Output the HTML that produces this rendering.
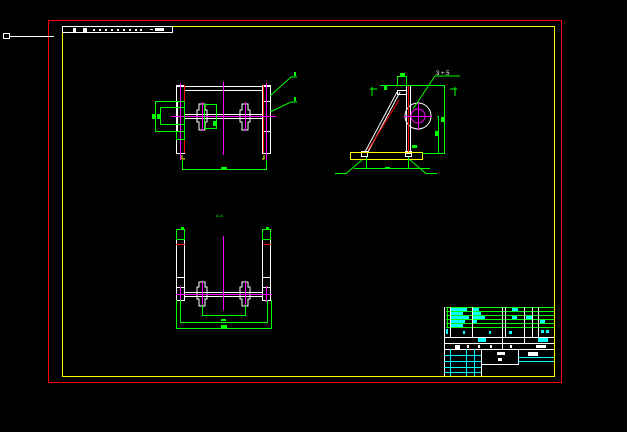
<!DOCTYPE html>
<html><head><style>html,body{margin:0;padding:0;background:#000;}svg{display:block}</style></head>
<body>
<svg width="627" height="432" viewBox="0 0 627 432" xmlns="http://www.w3.org/2000/svg" font-family="Liberation Sans, sans-serif">
<rect width="627" height="432" fill="#000"/>
<!-- borders -->
<rect x="48.5" y="20.5" width="513" height="362" fill="none" stroke="#f00" stroke-width="1"/>
<rect x="62.5" y="26.5" width="492" height="350" fill="none" stroke="#ff0" stroke-width="1"/>
<rect x="62.5" y="26.5" width="110" height="6" fill="none" stroke="#fff"/>
<g fill="#fff"><rect x="73" y="28" width="3" height="4"/><rect x="83" y="28" width="4" height="4"/>
<rect x="93" y="29" width="2" height="2"/><rect x="99" y="29" width="2" height="2"/><rect x="105" y="29" width="2" height="2"/><rect x="111" y="29" width="2" height="2"/><rect x="117" y="29" width="2" height="2"/><rect x="123" y="29" width="2" height="2"/><rect x="129" y="29" width="2" height="2"/><rect x="135" y="29" width="2" height="2"/><rect x="140" y="29" width="2" height="2"/>
<rect x="150" y="29" width="3" height="1"/><rect x="155" y="28" width="9" height="3"/></g>
<rect x="3.5" y="33.5" width="6" height="5" fill="none" stroke="#fff"/>
<line x1="10" y1="36.5" x2="54" y2="36.5" stroke="#fff"/>

<!-- FRONT VIEW -->
<g fill="none" stroke-width="1">
<g stroke="#fff">
<line x1="176" y1="86.5" x2="271" y2="86.5"/><line x1="185" y1="90.5" x2="262" y2="90.5"/>
<rect x="176.5" y="85.5" width="8" height="68"/><rect x="262.5" y="85.5" width="8" height="68"/>
<rect x="177.5" y="101.5" width="7" height="30"/><rect x="263.5" y="101.5" width="7" height="30"/>
<line x1="185" y1="114.5" x2="262" y2="114.5"/><line x1="185" y1="118.5" x2="262" y2="118.5"/>
<path d="M199 104 L205 104 L205 110 L207 110 L207 122 L205 122 L205 130 L199 130 L199 122 L197 122 L197 110 L199 110 Z"/>
<path d="M242 104 L248 104 L248 110 L250 110 L250 122 L248 122 L248 130 L242 130 L242 122 L240 122 L240 110 L242 110 Z"/>
</g>
<g stroke="#f00"><line x1="184.5" y1="85" x2="184.5" y2="153"/><line x1="263.5" y1="85" x2="263.5" y2="153"/></g>
<g stroke="#f0f"><line x1="223.5" y1="82" x2="223.5" y2="155"/><line x1="180.5" y1="83" x2="180.5" y2="160"/><line x1="266.5" y1="83" x2="266.5" y2="160"/>
<line x1="171" y1="116.5" x2="276" y2="116.5"/><line x1="202.5" y1="102" x2="202.5" y2="131"/><line x1="245.5" y1="102" x2="245.5" y2="131"/></g>
<g stroke="#0f0">
<rect x="155.5" y="101.5" width="29" height="30"/><rect x="160.5" y="107.5" width="24" height="17"/>
<rect x="204.5" y="104.5" width="12" height="24"/><rect x="176.5" y="131.5" width="8" height="8"/>
<path d="M182.5 160 V169.5 H266.5 V160"/>
<path d="M270 96 L291 77 H297"/><path d="M270 112 L291 102 H297"/>
</g>
<g fill="#0f0" stroke="none"><rect x="152" y="114" width="3" height="5"/><rect x="157" y="114" width="3" height="5"/><rect x="221" y="167" width="6" height="3"/><rect x="213" y="121" width="3" height="5"/><rect x="294" y="72" width="2" height="4"/><rect x="294" y="97" width="2" height="4"/></g>
<g stroke="#ff0"><path d="M182 155 V159 H185"/><path d="M264 155 V159 H262"/></g>
</g>

<!-- SIDE VIEW -->
<g fill="none">
<g stroke="#fff">
<rect x="406.5" y="85.5" width="4" height="68"/>
<line x1="397" y1="92" x2="365" y2="152"/><line x1="400" y1="92" x2="368" y2="152"/>
<rect x="397.5" y="90.5" width="9" height="4"/>
<circle cx="418" cy="116" r="13"/>
<rect x="361.5" y="151.5" width="6" height="5"/><rect x="405.5" y="151.5" width="6" height="5"/>
</g>
<g stroke="#f00"><line x1="408.5" y1="86" x2="408.5" y2="152"/><line x1="399" y1="100" x2="368" y2="150"/></g>
<g stroke="#f0f"><circle cx="418" cy="116" r="7"/><line x1="404" y1="116.5" x2="432" y2="116.5"/><line x1="418.5" y1="103" x2="418.5" y2="130"/></g>
<g stroke="#ff0"><rect x="350.5" y="152.5" width="72" height="7"/></g>
<g stroke="#0f0">
<rect x="397.5" y="76.5" width="9" height="9"/><line x1="380" y1="85.5" x2="443" y2="85.5"/>
<path d="M436 85.5 H444.5 V153.5 H422"/><path d="M437 116.5 H438.5 V153"/>
<path d="M413 109 L435 76 H460"/><path d="M370 89 H377 M372 87 V96"/><path d="M450 89 H457 M455 87 V96"/>
<path d="M354 168.5 H430"/><path d="M335 173.5 H346 L362 160"/><path d="M410 160 L426 173.5 H437"/>
<line x1="366.5" y1="157" x2="366.5" y2="168"/><line x1="408.5" y1="157" x2="408.5" y2="168"/>
</g>
<g fill="#0f0" stroke="none"><rect x="400" y="73" width="5" height="4"/><rect x="384" y="86" width="3" height="4"/><rect x="441" y="117" width="3" height="5"/><rect x="435" y="131" width="3" height="5"/><rect x="385" y="167" width="5" height="2"/><rect x="412" y="145" width="5" height="3"/></g>
<g fill="#fff" font-size="6"><text x="436" y="75">3 + 5</text></g>
</g>

<!-- SECTION VIEW -->
<g fill="none">
<text x="216" y="217" font-size="4" fill="#0f0">A-A</text>
<g stroke="#fff">
<rect x="176.5" y="239.5" width="8" height="61"/><rect x="262.5" y="239.5" width="8" height="61"/>
<line x1="176" y1="277.5" x2="185" y2="277.5"/><line x1="263" y1="277.5" x2="271" y2="277.5"/>
<rect x="176.5" y="287.5" width="8" height="13"/><rect x="262.5" y="287.5" width="8" height="13"/>
<line x1="185" y1="292.5" x2="262" y2="292.5"/><line x1="185" y1="296.5" x2="262" y2="296.5"/>
<path d="M199 282 L205 282 L205 287 L207 287 L207 299 L205 299 L205 306 L199 306 L199 299 L197 299 L197 287 L199 287 Z"/>
<path d="M242 282 L248 282 L248 287 L250 287 L250 299 L248 299 L248 306 L242 306 L242 299 L240 299 L240 287 L242 287 Z"/>
</g>
<g stroke="#f00"><line x1="176" y1="244.5" x2="185" y2="244.5"/><line x1="263" y1="244.5" x2="271" y2="244.5"/></g>
<g stroke="#f0f"><line x1="223.5" y1="236" x2="223.5" y2="310"/><line x1="180.5" y1="286" x2="180.5" y2="302"/><line x1="266.5" y1="286" x2="266.5" y2="302"/><line x1="176" y1="294.5" x2="272" y2="294.5"/><line x1="202.5" y1="282" x2="202.5" y2="306"/><line x1="245.5" y1="282" x2="245.5" y2="306"/></g>
<g stroke="#0f0">
<rect x="176.5" y="229.5" width="8" height="10"/><rect x="262.5" y="229.5" width="8" height="10"/>
<path d="M176.5 300 V328.5 H271.5 V300"/><path d="M180.5 300 V322.5 H267.5 V300"/><path d="M202.5 305 V315.5 H245.5 V305"/>
</g>
<g fill="#0f0" stroke="none"><rect x="181" y="227" width="3" height="2"/><rect x="266" y="227" width="3" height="2"/><rect x="221" y="325" width="6" height="3"/><rect x="221" y="319" width="5" height="2"/></g>
</g>

<!-- TITLE BLOCK -->
<g fill="none">
<g stroke="#0f0"><line x1="446" y1="307.5" x2="554" y2="307.5"/><line x1="446" y1="311.5" x2="554" y2="311.5"/><line x1="446" y1="315.5" x2="554" y2="315.5"/><line x1="446" y1="319.5" x2="554" y2="319.5"/><line x1="446" y1="323.5" x2="554" y2="323.5"/><line x1="446" y1="327.5" x2="554" y2="327.5"/><line x1="447.5" y1="307" x2="447.5" y2="328"/></g>
<g stroke="#fff"><line x1="444.5" y1="307" x2="444.5" y2="376"/><line x1="450.5" y1="307" x2="450.5" y2="337"/><line x1="472.5" y1="307" x2="472.5" y2="337"/><line x1="502.5" y1="307" x2="502.5" y2="349"/><line x1="505.5" y1="307" x2="505.5" y2="337"/><line x1="524.5" y1="307" x2="524.5" y2="343"/><line x1="532.5" y1="307" x2="532.5" y2="337"/><line x1="538.5" y1="307" x2="538.5" y2="337"/>
<line x1="444" y1="337.5" x2="554" y2="337.5"/><line x1="444" y1="343.5" x2="554" y2="343.5"/><line x1="444" y1="349.5" x2="554" y2="349.5"/><line x1="481.5" y1="349" x2="481.5" y2="376"/><line x1="518.5" y1="349" x2="518.5" y2="365"/><line x1="481" y1="364.5" x2="518" y2="364.5"/></g>
<g stroke="#0ff"><line x1="444" y1="355.5" x2="481" y2="355.5"/><line x1="444" y1="361.5" x2="481" y2="361.5"/><line x1="444" y1="367.5" x2="481" y2="367.5"/><line x1="444" y1="372.5" x2="481" y2="372.5"/><line x1="450.5" y1="349" x2="450.5" y2="376"/><line x1="466.5" y1="349" x2="466.5" y2="376"/><line x1="474.5" y1="349" x2="474.5" y2="376"/><line x1="518" y1="357.5" x2="554" y2="357.5"/><line x1="518" y1="361.5" x2="554" y2="361.5"/></g>
<g fill="#0ff" stroke="none"><rect x="451" y="308" width="16" height="3"/><rect x="451" y="312" width="12" height="3"/><rect x="451" y="316" width="18" height="3"/><rect x="451" y="320" width="14" height="3"/><rect x="451" y="324" width="12" height="3"/><rect x="473" y="308" width="6" height="3"/><rect x="473" y="312" width="8" height="3"/><rect x="473" y="316" width="12" height="3"/><rect x="473" y="320" width="4" height="3"/><rect x="512" y="308" width="6" height="3"/><rect x="512" y="316" width="5" height="3"/><rect x="526" y="316" width="6" height="3"/><rect x="540" y="320" width="5" height="3"/><rect x="478" y="338" width="8" height="4"/><rect x="538" y="338" width="10" height="4"/><rect x="446" y="329" width="2" height="5"/><rect x="463" y="331" width="2" height="3"/><rect x="489" y="331" width="2" height="3"/><rect x="509" y="331" width="3" height="3"/><rect x="541" y="330" width="3" height="3"/><rect x="546" y="330" width="3" height="3"/></g>
<g fill="#fff" stroke="none"><rect x="497" y="352" width="8" height="3"/><rect x="528" y="352" width="10" height="4"/><rect x="498" y="358" width="4" height="3"/><rect x="455" y="345" width="5" height="4"/><rect x="536" y="345" width="10" height="3"/><rect x="467" y="345" width="2" height="3"/><rect x="478" y="345" width="2" height="3"/><rect x="490" y="345" width="2" height="3"/><rect x="510" y="345" width="2" height="3"/></g>
</g>
</svg>
</body></html>
